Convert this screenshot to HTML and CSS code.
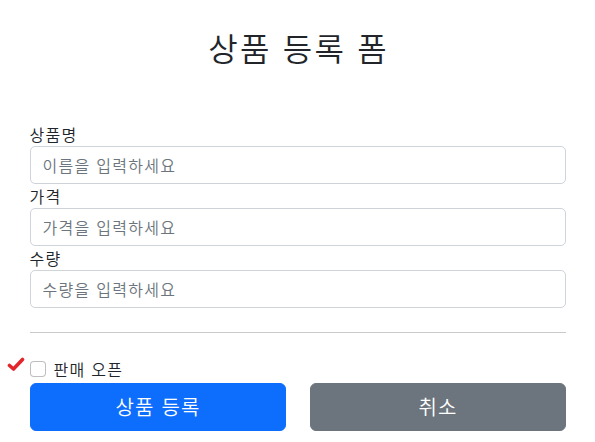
FILE: index.html
```html
<!DOCTYPE html>
<html lang="ko">
<head>
<meta charset="utf-8">
<title>상품 등록 폼</title>
<link rel="stylesheet" href="styles.css">
</head>
<body>
<div class="container">
  <div class="header">
    <h2>상품 등록 폼</h2>
  </div>
  <form class="form">
    <div class="field">
      <label for="itemName">상품명</label>
      <input id="itemName" class="control" type="text" placeholder="이름을 입력하세요">
    </div>
    <div class="field">
      <label for="price">가격</label>
      <input id="price" class="control" type="text" placeholder="가격을 입력하세요">
    </div>
    <div class="field">
      <label for="quantity">수량</label>
      <input id="quantity" class="control" type="text" placeholder="수량을 입력하세요">
    </div>
    <hr class="divider">
    <div class="check">
      <svg class="mark" width="18" height="16" viewBox="0 0 18 16"><path d="M2.5 8.5 L6.5 12 L15.5 2.5" fill="none" stroke="#e3262c" stroke-width="3.6" stroke-linecap="round" stroke-linejoin="round"/></svg>
      <input id="open" class="check-input" type="checkbox">
      <label for="open" class="check-label">판매 오픈</label>
    </div>
    <div class="actions">
      <button type="submit" class="btn btn-primary">상품 등록</button>
      <button type="button" class="btn btn-secondary">취소</button>
    </div>
  </form>
</div>
</body>
</html>
```

FILE: styles.css
```css
* { box-sizing: border-box; }
html, body { margin: 0; padding: 0; background: #fff; }
body {
  font-family: "Noto Sans CJK KR", "Noto Sans", "Liberation Sans", sans-serif;
  font-size: 16px;
  font-weight: 350;
  line-height: 1.5;
  color: #212529;
  letter-spacing: 0.08em;
}
.container {
  max-width: 560px;
  margin: 0 auto;
  padding: 0 12px;
}
.header {
  padding: 28px 0 48px;
  text-align: center;
}
.header h2 {
  margin: 0 0 8px;
  font-size: 32px;
  font-weight: 350;
  line-height: 1.2;
  letter-spacing: 0.07em;
  text-indent: 0.07em;
}
.field label {
  display: block;
  line-height: 24px;
}
.control {
  display: block;
  width: 100%;
  height: 38px;
  padding: 6px 12px;
  font: inherit;
  font-size: 16px;
  letter-spacing: 0.08em;
  color: #212529;
  border: 1px solid #ced4da;
  border-radius: 5px;
  background: #fff;
}
.control::placeholder { color: #6c757d; opacity: 1; }
.divider {
  margin: 24px 0;
  border: 0;
  border-top: 1px solid #c9cacc;
  height: 0;
}
.check {
  position: relative;
  min-height: 24px;
  margin-bottom: 2px;
  padding-left: 24px;
  display: flex;
  align-items: center;
}
.check-input {
  appearance: none;
  -webkit-appearance: none;
  width: 16px;
  height: 16px;
  margin: 0 0 0 -24px;
  border: 1px solid rgba(0,0,0,0.25);
  border-radius: 4px;
  background: #fff;
}
.check-label { margin-left: 8px; }
.mark {
  position: absolute;
  left: -23px;
  top: 0;
}
.actions {
  display: grid;
  grid-template-columns: 1fr 1fr;
  column-gap: 24px;
}
.btn {
  height: 48px;
  font: inherit;
  font-size: 20px;
  letter-spacing: 0.06em;
  text-indent: 0.06em;
  color: #fff;
  border: 1px solid transparent;
  border-radius: 6px;
  padding: 8px 16px;
}
.btn-primary { background: #0d6efd; border-color: #0d6efd; }
.btn-secondary { background: #6c757d; border-color: #6c757d; }
```
